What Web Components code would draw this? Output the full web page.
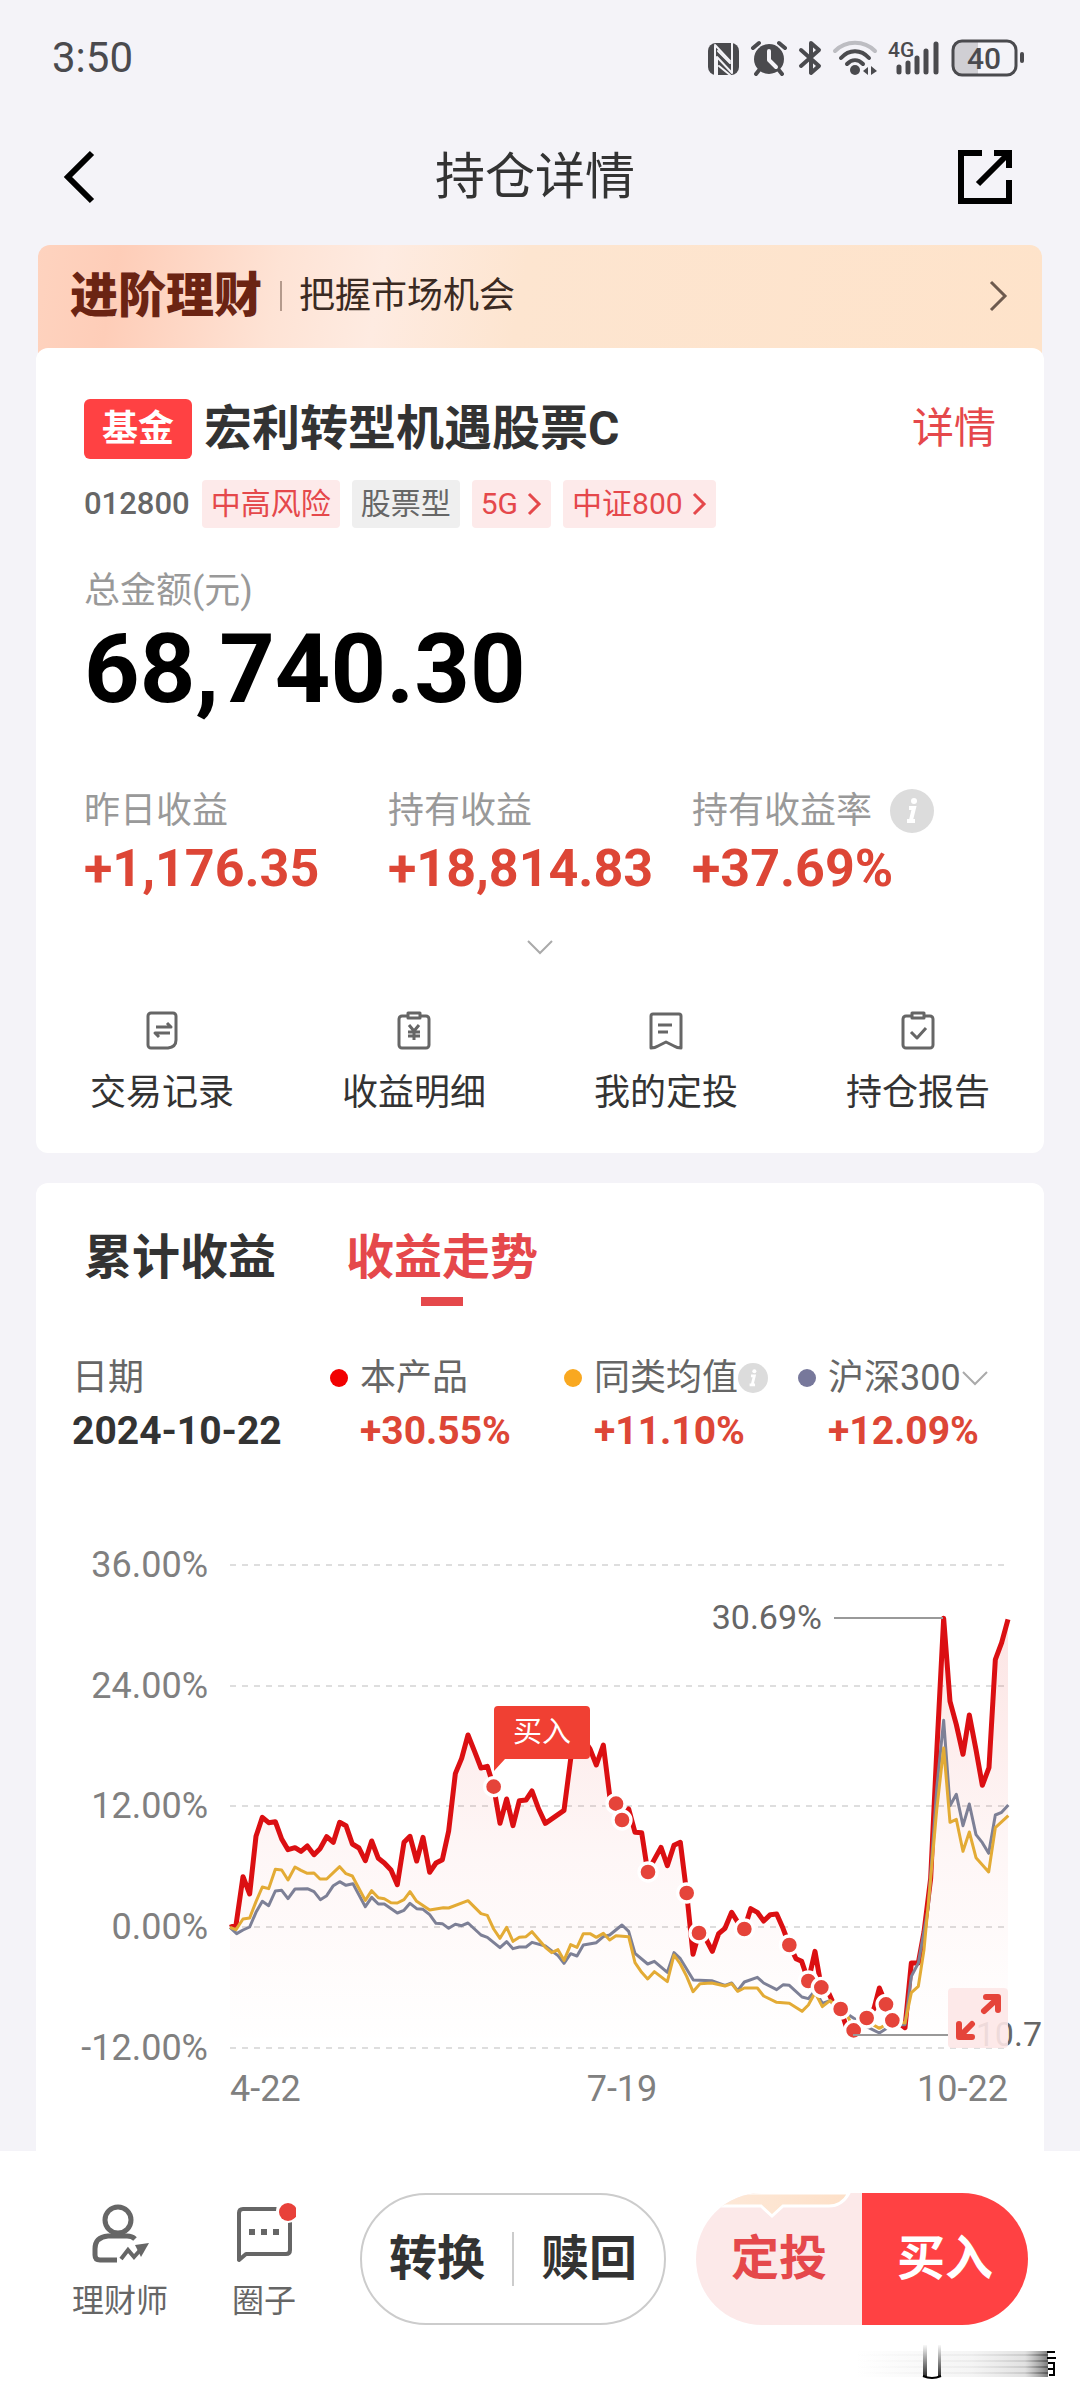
<!DOCTYPE html>
<html lang="zh-CN">
<head>
<meta charset="utf-8">
<meta name="viewport" content="width=device-width, initial-scale=1">
<title>持仓详情</title>
<style>
  body {
    margin: 0;
    background: #f4f3f8;
    color: #333;
    font-family: Roboto, "Noto Sans CJK SC", sans-serif;
    --red: #e5484b;
    --gain: #dd4636;
    --muted: #999;
    --pad: 36px;
  }
</style>
</head>
<body>
<fund-app></fund-app>

<script>
const RESET = `
  *, *::before, *::after { box-sizing: border-box; }
  button { appearance: none; margin: 0; padding: 0; border: 0; background: none; font: inherit; color: inherit; cursor: pointer; }
  a { color: inherit; text-decoration: none; }
  svg { display: block; flex: none; }
`;

function define(name, render, after) {
  customElements.define(name, class extends HTMLElement {
    connectedCallback() {
      if (this.shadowRoot) return;
      const root = this.attachShadow({ mode: 'open' });
      const tpl = document.createElement('template');
      const html = typeof render === 'function' ? render(this) : render;
      tpl.innerHTML = `<style>${RESET}</style>${html}`;
      root.append(tpl.content.cloneNode(true));
      if (after) after(root, this);
    }
  });
}

/* ---------- status bar ---------- */
define('status-bar', `
<style>
  :host { display: flex; align-items: center; justify-content: space-between; height: 116px; padding: 0 53px 0 52px; color: #4a4a4e; }
  time { font-size: 42px; line-height: 48px; }
</style>
<time>3:50</time>
<svg width="320" height="40" viewBox="0 0 320 40" fill="#4a4a4e" stroke-linecap="round" stroke-linejoin="round">
  <rect x="1" y="5" width="31" height="32" rx="8"/>
  <path d="M8 37V8M8 7l15 16M25 5v30L10 19v18" fill="none" stroke="#f4f3f8" stroke-width="2"/>
  <path d="M12 28l11 9M11 13l12 12" fill="none" stroke="#f4f3f8" stroke-width="2"/>
  <circle cx="62" cy="21" r="15"/>
  <path d="M46 10l6-5M78 10l-6-5M53 31l-4 5M71 31l4 5" stroke="#4a4a4e" stroke-width="4"/>
  <path d="M62 13v9l7 7" fill="none" stroke="#f4f3f8" stroke-width="4"/>
  <path d="M94 12l18 16-8 7V5l8 7-18 16" fill="none" stroke="#4a4a4e" stroke-width="4"/>
  <path d="M128 13c11-11 29-11 40 0" fill="none" stroke="#bdbdc2" stroke-width="4"/>
  <path d="M134 20c8-9 20-9 28 0M140 26c5-5 11-5 16 0" fill="none" stroke="#4a4a4e" stroke-width="4"/>
  <circle cx="148" cy="32" r="5"/>
  <path d="M156 33l5-4v8zM164 28l6 5-6 4z"/>
  <text x="181" y="19" font-size="21" font-weight="500">4G</text>
  <path d="M192 29v5M201 25v9M210 20v14M219 13v21M229 6v28" stroke="#4a4a4e" stroke-width="5"/>
  <path d="M254 3h17v33h-17q-8 0-8-8V11q0-8 8-8z" fill="#d0cfd4"/>
  <rect x="246" y="3" width="63" height="34" rx="9" fill="none" stroke="#4a4a4e" stroke-width="3"/>
  <rect x="313" y="14" width="4" height="11" rx="2"/>
  <text x="277" y="31" font-size="30" font-weight="500" text-anchor="middle">40</text>
</svg>`);

/* ---------- navigation header ---------- */
define('nav-header', `
<style>
  :host { display: grid; grid-template-columns: 54px 1fr 54px; align-items: center; height: 122px; padding: 0 68px 0 58px; margin-bottom: 7px; }
  h1 { margin: 0; text-align: center; font-size: 50px; line-height: 60px; font-weight: 400; }
</style>
<button aria-label="返回">
  <svg width="42" height="54" viewBox="0 0 42 54" fill="none" stroke="#000" stroke-width="6"><path d="M34 3L10 27l24 24"/></svg>
</button>
<h1><slot></slot></h1>
<button aria-label="分享">
  <svg width="54" height="54" viewBox="0 0 54 54" fill="none" stroke="#000" stroke-width="6"><path d="M24 3H3v48h48V30M36 3h15v15M20 34L50 4"/></svg>
</button>`);

/* ---------- banner ---------- */
define('promo-banner', `
<style>
  :host { display: block; margin: 0 38px; }
  a { display: flex; align-items: center; height: 116px; padding: 0 34px 14px 32px; border-radius: 12px 12px 0 0;
      background: linear-gradient(100deg, #fed3bf 0, #fecdb8 8%, #fee3d5 24%, #feebe1 34%, #fde5d0 48%, #fee3ca 100%); }
  strong { font-size: 48px; line-height: 60px; font-weight: 900; color: #6b2413; }
  i { width: 2px; height: 30px; margin: 0 17px 0 18px; background: #b49a8c; }
  span { flex: 1; font-size: 36px; line-height: 44px; color: #3a2a22; }
</style>
<a href="#advance"><strong><slot name="title"></slot></strong><i></i><span><slot></slot></span>
<svg width="20" height="32" viewBox="0 0 20 32" fill="none" stroke="#6d5a4e" stroke-width="3"><path d="M3 2l14 14L3 30"/></svg></a>`);

/* ---------- small parts ---------- */
define('info-dot', `
<style>
  :host { display: inline-flex; }
  button { width: var(--size, 44px); height: var(--size, 44px); }
  svg { width: 100%; height: 100%; }
</style>
<button aria-label="说明"><svg viewBox="0 0 44 44"><circle cx="22" cy="22" r="22" fill="#dcdcdc"/><circle cx="24" cy="12" r="3" fill="#fff"/><path d="M19 19h5l-3 12M17 32h8" fill="none" stroke="#fff" stroke-width="4"/></svg></button>`);

define('fund-tag', el => `
<style>
  :host { display: inline-flex; align-items: center; gap: 8px; height: 48px; padding: 0 9px; border-radius: 4px;
          background: #fdeaea; color: var(--red); font-size: 30px; line-height: 40px; white-space: nowrap; }
  :host([tone="grey"]) { background: #efefef; color: #666; }
</style>
<slot></slot>${el.hasAttribute('link') ? '<svg width="16" height="24" viewBox="0 0 16 24" fill="none" stroke="#e5484b" stroke-width="3"><path d="M3 2l10 10L3 22"/></svg>' : ''}`);

define('stat-item', `
<style>
  :host { display: block; }
  .label { display: flex; align-items: center; gap: 18px; height: 48px; font-size: 36px; line-height: 48px; color: var(--muted); white-space: nowrap; }
  .value { margin-top: 6px; font-size: 52px; line-height: 56px; font-weight: 700; color: var(--gain); }
</style>
<div class="label"><slot name="label"></slot><slot name="extra"></slot></div>
<div class="value"><slot></slot></div>`);

const QUICK = {
  swap: '<path d="M7 3h22a3 3 0 0 1 3 3v24q0 7-8 8H7a3 3 0 0 1-3-3V6a3 3 0 0 1 3-3z"/><path d="M12 17h15l-4-4M26 23H11l4 4"/>',
  yen: '<path d="M11 6H6a3 3 0 0 0-3 3v26a3 3 0 0 0 3 3h24a3 3 0 0 0 3-3V9a3 3 0 0 0-3-3h-5"/><path d="M12 3h12v5H12z"/><path d="M13 15l5 6 5-6M12 22h12M12 26h12M18 21v9"/>',
  plan: '<path d="M5 4h26a2 2 0 0 1 2 2v32q-4 0-7-2l-8-4-8 4q-3 2-7 2V6a2 2 0 0 1 2-2z"/><path d="M10 15h14M10 22h10"/>',
  report: '<path d="M11 6H6a3 3 0 0 0-3 3v26a3 3 0 0 0 3 3h24a3 3 0 0 0 3-3V9a3 3 0 0 0-3-3h-5"/><path d="M12 3h12v5H12z"/><path d="M11 22l6 6 9-10"/>'
};
define('quick-link', el => `
<style>
  :host { display: block; }
  a { display: flex; flex-direction: column; align-items: center; gap: 20px; font-size: 36px; line-height: 44px; }
</style>
<a href="#${el.getAttribute('icon')}">
  <svg width="36" height="41" viewBox="0 0 36 41" fill="none" stroke="#666" stroke-width="3" stroke-linejoin="round">${QUICK[el.getAttribute('icon')]}</svg>
  <slot></slot>
</a>`);

/* ---------- position summary ---------- */
define('position-card', `
<style>
  :host { display: block; position: relative; margin: -13px var(--pad) 30px; padding: 51px 0 38px; border-radius: 12px; background: #fff; }
  .body { padding: 0 48px; }
  .name { display: flex; align-items: center; gap: 12px; height: 60px; }
  .badge { height: 60px; padding: 0 18px; border-radius: 6px; background: #ff4143; color: #fff; font-size: 36px; line-height: 60px; font-weight: 700; }
  h2 { flex: 1; margin: 0; font-size: 48px; line-height: 62px; font-weight: 700; }
  .name a { font-size: 42px; line-height: 62px; color: var(--red); }
  .tags { display: flex; align-items: center; gap: 12px; margin-top: 21px; }
  .code { font-size: 31px; line-height: 48px; font-weight: 500; color: #666; }
  .label { margin-top: 40px; font-size: 36px; line-height: 46px; color: var(--muted); }
  .amount { font-size: 97px; line-height: 110px; font-weight: 700; color: #000; }
  .stats { display: grid; grid-template-columns: repeat(3, 1fr); margin-top: 63px; }
  .more { display: block; margin: 41px auto 54px; }
  .links { display: grid; grid-template-columns: repeat(4, 1fr); }
</style>
<div class="body">
  <div class="name"><span class="badge">基金</span><h2>宏利转型机遇股票C</h2><a href="#detail">详情</a></div>
  <div class="tags"><span class="code">012800</span><fund-tag>中高风险</fund-tag><fund-tag tone="grey">股票型</fund-tag><fund-tag link>5G</fund-tag><fund-tag link>中证800</fund-tag></div>
  <div class="label">总金额(元)</div>
  <div class="amount">68,740.30</div>
  <div class="stats">
    <stat-item><span slot="label">昨日收益</span>+1,176.35</stat-item>
    <stat-item><span slot="label">持有收益</span>+18,814.83</stat-item>
    <stat-item><span slot="label">持有收益率</span><info-dot slot="extra"></info-dot>+37.69%</stat-item>
  </div>
</div>
<button class="more" aria-label="展开"><svg width="28" height="18" viewBox="0 0 28 18" fill="none" stroke="#aaa" stroke-width="2"><path d="M2 3l12 12L26 3"/></svg></button>
<nav class="links">
  <quick-link icon="swap">交易记录</quick-link>
  <quick-link icon="yen">收益明细</quick-link>
  <quick-link icon="plan">我的定投</quick-link>
  <quick-link icon="report">持仓报告</quick-link>
</nav>`);

/* ---------- trend ---------- */
define('legend-item', el => `
<style>
  :host { display: block; white-space: nowrap; }
  .label { display: flex; align-items: center; height: 48px; font-size: 36px; line-height: 48px; color: #666; }
  .dot { width: 18px; height: 18px; margin-right: 12px; border-radius: 50%; background: ${el.getAttribute('color')}; }
  .value { margin-top: 5px; font-size: 39px; line-height: 48px; font-weight: 700; }
  :host([color]) .value { padding-left: 30px; color: var(--gain); }
</style>
<div class="label">${el.hasAttribute('color') ? '<i class="dot"></i>' : ''}<slot name="label"></slot><slot name="extra"></slot></div>
<div class="value"><slot></slot></div>`);

const FUND = '90,1285 108,1278 129,1133 149,1185 168,1012 187,955 206,971 226,968 245,1020 264,1052 285,1046 303,1057 322,1041 342,1067 360,1049 380,1013 400,1030 419,970 438,980 457,1035 477,1047 496,1085 515,1026 535,1078 553,1092 573,1113 592,1157 612,1030 630,1012 650,1086 669,1015 689,1120 708,1092 727,1082 746,996 766,824 785,778 804,708 824,758 843,807 862,802 881,863 900,973 920,900 939,980 958,905 978,903 996,876 1016,930 1036,973 1092,934 1112,780 1131,740 1150,720 1170,750 1189,798 1210,738 1229,890 1248,914 1266,963 1286,930 1305,1000 1325,1001 1343,1118 1383,1045 1402,1100 1422,1039 1441,1030 1460,1182 1479,1366 1497,1302 1518,1320 1537,1357 1556,1304 1575,1288 1595,1240 1613,1269 1633,1290 1652,1229 1672,1240 1691,1266 1711,1247 1730,1245 1749,1288 1768,1338 1788,1379 1805,1387 1825,1446 1845,1357 1864,1465 1883,1475 1900,1513 1922,1530 1942,1593 1961,1594 2000,1557 2022,1529 2038,1467 2058,1516 2077,1564 2097,1572 2115,1586 2134,1392 2155,1392 2172,1299 2192,1138 2210,763 2231,358 2250,607 2269,677 2289,766 2308,648 2328,752 2347,859 2367,806 2386,482 2405,431 2424,361';
const PEERS = '90,1285 108,1292 129,1260 149,1257 168,1208 187,1164 206,1169 226,1111 245,1113 264,1143 285,1104 303,1114 322,1123 342,1122 360,1140 380,1140 400,1121 419,1103 438,1124 457,1131 496,1204 515,1175 535,1196 553,1199 573,1211 592,1212 612,1202 630,1178 650,1207 689,1233 730,1226 746,1227 804,1205 843,1244 862,1249 881,1290 900,1318 920,1285 939,1327 958,1315 978,1313 996,1298 1036,1345 1055,1361 1074,1352 1092,1384 1112,1337 1131,1345 1150,1304 1170,1304 1189,1315 1210,1303 1229,1323 1248,1310 1286,1313 1305,1391 1325,1420 1343,1440 1363,1418 1402,1448 1422,1368 1441,1395 1460,1432 1479,1478 1500,1454 1535,1452 1575,1461 1595,1454 1613,1477 1633,1467 1672,1467 1691,1491 1730,1510 1768,1513 1806,1537 1825,1518 1845,1481 1867,1523 1890,1505 1942,1550 1961,1588 2000,1566 2038,1588 2077,1566 2115,1572 2134,1481 2155,1462 2172,1352 2192,1138 2210,934 2231,747 2250,970 2269,961 2289,1057 2308,999 2328,1076 2366,1119 2386,986 2425,950';
const INDEX = '90,1285 110,1304 129,1293 149,1284 168,1240 187,1207 206,1220 226,1176 245,1174 264,1199 285,1170 322,1169 342,1178 361,1202 380,1190 400,1160 419,1148 438,1159 459,1154 496,1223 515,1195 535,1215 553,1215 592,1242 612,1234 630,1213 650,1229 669,1231 689,1247 708,1273 727,1274 746,1288 766,1276 785,1280 804,1272 843,1308 862,1315 900,1346 920,1328 939,1349 958,1344 978,1344 996,1330 1036,1341 1074,1370 1092,1393 1112,1364 1131,1371 1150,1338 1189,1331 1210,1313 1229,1308 1266,1278 1286,1297 1305,1363 1343,1395 1363,1387 1402,1420 1422,1361 1441,1379 1480,1443 1535,1445 1575,1459 1595,1452 1613,1475 1633,1449 1672,1435 1691,1452 1730,1472 1750,1457 1768,1459 1806,1494 1825,1499 1845,1475 1867,1513 1890,1505 1942,1545 2000,1583 2038,1602 2077,1577 2115,1577 2134,1432 2155,1392 2185,1224 2210,870 2231,664 2250,920 2269,886 2289,980 2308,915 2328,1007 2347,1031 2366,1063 2386,948 2405,940 2425,918';
const BUYS = [[881,863],[1248,914],[1266,963],[1344,1119],[1460,1182],[1497,1302],[1633,1290],[1768,1338],[1825,1446],[1864,1465],[1922,1530],[1961,1594],[2000,1557],[2058,1516],[2077,1564]];
const TICKS = [['36.00%', 36], ['24.00%', 157], ['12.00%', 277], ['0.00%', 398], ['-12.00%', 519]];

define('trend-chart', `
<style>
  :host { display: block; position: relative; overflow: hidden; }
  svg.chart { width: 100%; height: auto; }
  .axis { font-size: 36px; fill: #808080; }
  .note { font-size: 34px; fill: #666; }
  button { position: absolute; right: 36px; bottom: 81px; width: 60px; height: 60px; border-radius: 4px; background: rgba(253, 231, 231, .9); }
</style>
<svg class="chart" viewBox="0 0 1008 600" role="img" aria-label="收益走势">
  <defs><linearGradient id="fade" x1="0" y1="0" x2="0" y2="1">
    <stop offset="0" stop-color="#e8302a" stop-opacity=".13"/><stop offset=".55" stop-color="#e8302a" stop-opacity=".04"/><stop offset="1" stop-color="#e8302a" stop-opacity="0"/>
  </linearGradient></defs>
  ${TICKS.map(([t, y]) => `<path d="M194 ${y}H970" stroke="#dedede" stroke-width="2" stroke-dasharray="6 6"/><text class="axis" x="172" y="${y + 12}" text-anchor="end">${t}</text>`).join('')}
  <text class="axis" x="194" y="572">4-22</text>
  <text class="axis" x="586" y="572" text-anchor="middle">7-19</text>
  <text class="axis" x="972" y="572" text-anchor="end">10-22</text>
  <svg x="164" y="0" width="844" height="600" viewBox="0 90 2532 1800" fill="none" stroke-linejoin="round">
    <polygon points="90,1646 ${FUND} 2424,1646" fill="url(#fade)"/>
    <polyline points="${FUND}" stroke="#db0f12" stroke-width="15"/>
    <polyline points="${INDEX}" stroke="#7d8096" stroke-width="9"/>
    <polyline points="${PEERS}" stroke="#e3ab35" stroke-width="9"/>
    ${BUYS.map(([x, y]) => `<circle cx="${x}" cy="${y}" r="27" fill="#e5443a" stroke="#fff" stroke-width="10"/>`).join('')}
  </svg>
  <path d="M798 89H907M817 506H912" stroke="#999" stroke-width="2"/>
  <text class="note" x="786" y="100" text-anchor="end">30.69%</text>
  <text class="note" x="1006" y="517" text-anchor="end">-10.7</text>
  <path d="M462 177h88q4 0 4 4v45q0 4-4 4h-81l-11 12V181q0-4 4-4z" fill="#f04033"/>
  <text x="506" y="213" text-anchor="middle" font-size="29" fill="#fff">买入</text>
</svg>
<button aria-label="全屏查看">
  <svg width="60" height="60" viewBox="0 0 60 60" fill="none" stroke="#e5443a" stroke-width="6" stroke-linecap="round" stroke-linejoin="round"><path d="M36 23L49 11M38 9h12v13M24 36L12 48M11 36v13h13"/></svg>
</button>`);

define('trend-card', `
<style>
  :host { display: block; flex: 1; margin: 0 var(--pad); padding: 45px 0 22px; border-radius: 12px 12px 0 0; background: #fff; }
  .tabs { display: flex; gap: 70px; padding: 0 48px; }
  .tabs button { display: flex; flex-direction: column; align-items: center; gap: 9px; font-size: 48px; line-height: 60px; font-weight: 700; white-space: nowrap; }
  .tabs button[aria-selected="true"] { color: var(--red); }
  .tabs button[aria-selected="true"]::after { content: ""; width: 42px; height: 9px; background: var(--red); }
  .legend { display: grid; grid-template-columns: 258px repeat(3, 1fr); margin: 48px 12px 74px 36px; }
  info-dot { --size: 30px; }
</style>
<div class="tabs" role="tablist"><button role="tab" aria-selected="false">累计收益</button><button role="tab" aria-selected="true">收益走势</button></div>
<div class="legend">
  <legend-item><span slot="label">日期</span>2024-10-22</legend-item>
  <legend-item color="#f20000"><span slot="label">本产品</span>+30.55%</legend-item>
  <legend-item color="#f9a820"><span slot="label">同类均值</span><info-dot slot="extra"></info-dot>+11.10%</legend-item>
  <legend-item color="#77789b"><span slot="label">沪深300</span><svg slot="extra" width="28" height="18" viewBox="0 0 28 18" fill="none" stroke="#aaa" stroke-width="2"><path d="M2 3l12 12L26 3"/></svg>+12.09%</legend-item>
</div>
<trend-chart></trend-chart>`);

/* ---------- bottom actions ---------- */
define('action-bar', `
<style>
  :host { display: flex; align-items: flex-start; height: 249px; padding: 42px 52px 0 72px; background: #fff; position: relative; }
  .side { display: flex; flex-direction: column; align-items: center; gap: 18px; padding-top: 10px; font-size: 32px; line-height: 40px; color: #666; white-space: nowrap; }
  .side + .side { margin-left: 64px; }
  .pill { display: flex; align-items: center; height: 132px; border-radius: 66px; font-size: 48px; line-height: 60px; font-weight: 700; white-space: nowrap; }
  .pill button { flex: 1; height: 100%; }
  .plain { flex: 302; margin-left: 64px; border: 2px solid #ccc; }
  .plain i { width: 2px; height: 54px; background: #ccc; }
  .solid { flex: 332; margin-left: 30px; overflow: hidden; position: relative; }
  .plan { background: #fce9e9; color: var(--red); }
  .buy { background: #ff4143; color: #fff; }
  .tip { position: absolute; left: 0; top: 0; }
  .home { position: absolute; right: 24px; bottom: 20px; }
</style>
<button class="side"><svg width="60" height="60" viewBox="0 0 60 60" fill="none" stroke="#666" stroke-width="5"><circle cx="28" cy="17" r="13"/><path d="M45 36q-3-3-8-3H18Q5 34 5 46v6q0 5 5 5h17"/><path d="M31 56l7-9 6 7 8-9" stroke-width="4"/><path d="M45 42l14-2-8 14z" fill="#666" stroke="none"/></svg>理财师</button>
<button class="side"><svg width="64" height="60" viewBox="0 0 64 60" fill="none" stroke="#666" stroke-width="4"><path d="M7 57V10q0-4 4-4h43q4 0 4 4v37q0 4-4 4H14z" stroke-linejoin="round"/><path d="M17 29h6M29 29h6M41 29h6" stroke-width="6"/><circle cx="56" cy="8" r="12" fill="#fff" stroke="none"/><circle cx="56" cy="9" r="9" fill="#e8413a" stroke="none"/></svg>圈子</button>
<div class="pill plain"><button>转换</button><i></i><button>赎回</button></div>
<div class="pill solid"><button class="plan">定投</button><button class="buy">买入</button>
  <svg class="tip" width="160" height="28" viewBox="0 0 160 28"><defs><linearGradient id="peach"><stop offset="0" stop-color="#fdeadb"/><stop offset="1" stop-color="#fde0c8"/></linearGradient></defs><path d="M0 0h153q-7 13-20 13H87L76 23 65 13H22Q6 12 0 0z" fill="url(#peach)" stroke="#fff" stroke-width="3"/><path d="M0 2q8 11 24 12l-12 12H0z" fill="#fff"/></svg>
</div>
<svg class="home" width="200" height="36" viewBox="0 0 200 36">
  <defs><linearGradient id="smear" gradientUnits="userSpaceOnUse" x1="0" y1="0" x2="192" y2="0"><stop offset="0" stop-color="#aaa" stop-opacity="0"/><stop offset=".6" stop-color="#aaa" stop-opacity=".12"/><stop offset=".88" stop-color="#888" stop-opacity=".25"/><stop offset="1" stop-color="#444" stop-opacity=".7"/></linearGradient>
  <linearGradient id="drop" gradientUnits="userSpaceOnUse" x1="0" y1="0" x2="0" y2="34"><stop offset="0" stop-color="#222" stop-opacity="0"/><stop offset="1" stop-color="#222"/></linearGradient></defs>
  <g fill="url(#smear)"><rect y="7" width="192" height="26"/><rect y="10" width="192" height="2"/><rect y="16" width="192" height="2"/><rect y="22" width="192" height="2"/><rect y="28" width="192" height="2"/></g>
  <path d="M67 1h18v32q-9 3-18 0z" fill="#fff"/>
  <path d="M67 1h4v32h-4zM82 1h3v32h-3z" fill="url(#drop)"/>
  <path d="M67 32q9 4 18 0" fill="none" stroke="#000" stroke-width="2"/>
  <path d="M191 8h8M191 14h9M192 19h6v12h-5M192 25h5" fill="none" stroke="#000" stroke-width="2"/>
</svg>`);

define('fund-app', `
<style>:host { display: flex; flex-direction: column; min-height: 100vh; }</style>
<status-bar></status-bar>
<nav-header>持仓详情</nav-header>
<promo-banner><span slot="title">进阶理财</span>把握市场机会</promo-banner>
<position-card></position-card>
<trend-card></trend-card>
<action-bar></action-bar>`);
</script>
</body>
</html>
